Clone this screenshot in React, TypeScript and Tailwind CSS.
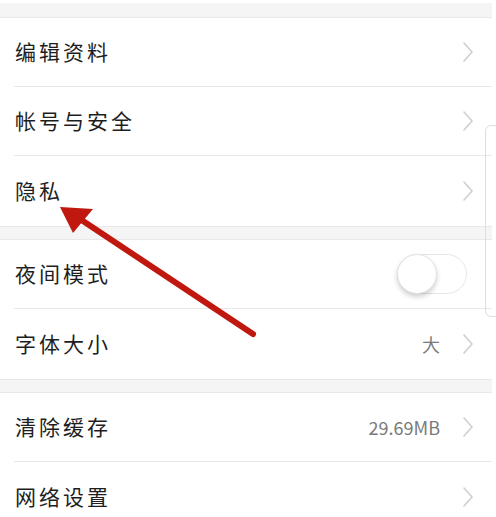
import React from "react";

const font = { fontFamily: '"Noto Sans CJK SC", "Noto Sans", sans-serif' };

function Chevron() {
  return (
    <svg width="12" height="22" viewBox="0 0 12 22" className="shrink-0">
      <path d="M2 2 L10 11 L2 20" fill="none" stroke="#cfcfcf" strokeWidth="1.6" strokeLinecap="round" strokeLinejoin="round" />
    </svg>
  );
}

function Row({ label, value, last, toggle }: { label: string; value?: string; last?: boolean; toggle?: boolean }) {
  return (
    <div className="pl-[14px] bg-white">
      <div className={`flex items-center pr-[18px] ${last ? "h-[70px]" : "h-[69px] border-b border-[#e8e8e8]"}`}>
        <span className="text-[21px] tracking-[3px] text-[#1e1e1e] pl-[1px] flex-1" style={font}>{label}</span>
        {value && <span className="text-[18px] text-[#7a7a7a] mr-[22px]" style={font}>{value}</span>}
        {toggle ? (
          <div className="w-[70px] h-[40px] rounded-full border border-[#e6e6e6] bg-white relative mr-[7px]">
            <div className="absolute left-[-1px] top-[-1px] w-[40px] h-[40px] rounded-full bg-white border border-[#e2e2e2] shadow-[0_3px_5px_rgba(0,0,0,0.18)]" />
          </div>
        ) : (
          <Chevron />
        )}
      </div>
    </div>
  );
}

export default function App() {
  return (
    <div className="w-[496px] h-[517px] bg-white relative overflow-hidden" style={font}>
      <div className="w-[492px]">
        <div className="h-[3px] bg-white" />
        <div className="h-[15px] bg-[#f5f5f5] border-b border-[#e8e8e8]" />
        <Row label="编辑资料" />
        <Row label="帐号与安全" />
        <Row label="隐私" last />
        <div className="h-[14px] bg-[#f5f5f5] border-y border-[#e8e8e8]" />
        <Row label="夜间模式" toggle />
        <Row label="字体大小" value="大" last />
        <div className="h-[14px] bg-[#f5f5f5] border-y border-[#e8e8e8]" />
        <Row label="清除缓存" value="29.69MB" />
        <Row label="网络设置" last />
      </div>
      <div className="absolute left-[485px] top-[125px] w-[30px] h-[192px] border border-[#dedede] rounded-[6px]" />
      <svg className="absolute left-0 top-0" width="496" height="517" viewBox="0 0 496 517">
        <line x1="253" y1="334" x2="80" y2="219" stroke="#c0170f" strokeWidth="6" strokeLinecap="round" />
        <polygon points="60,207 93,209 73,233" fill="#c0170f" />
      </svg>
    </div>
  );
}
